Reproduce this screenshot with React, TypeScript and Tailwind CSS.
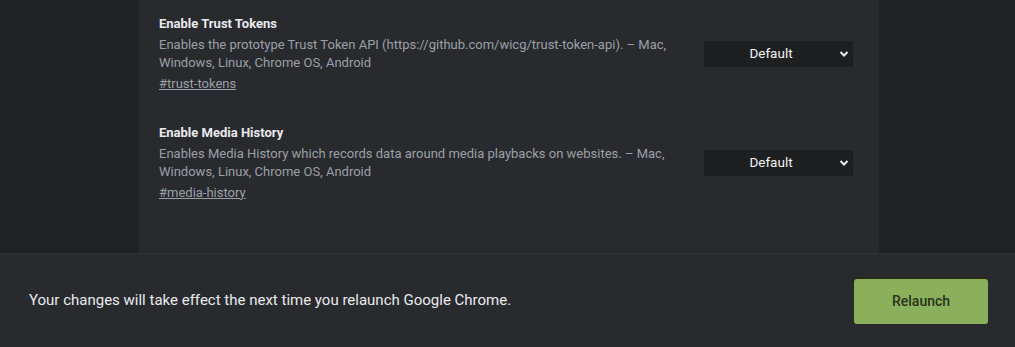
import React from 'react';

type Flag = {
  name: string;
  description: string;
  hash: string;
};

const flags: Flag[] = [
  {
    name: 'Enable Trust Tokens',
    description:
      'Enables the prototype Trust Token API (https://github.com/wicg/trust-token-api). – Mac, Windows, Linux, Chrome OS, Android',
    hash: '#trust-tokens',
  },
  {
    name: 'Enable Media History',
    description:
      'Enables Media History which records data around media playbacks on websites. – Mac, Windows, Linux, Chrome OS, Android',
    hash: '#media-history',
  },
];

const FlagRow: React.FC<{ flag: Flag }> = ({ flag }) => (
  <div className="flex items-center justify-between h-[109px]">
    <div className="w-[520px]">
      <h3 className="text-[13px] font-bold text-[#e8eaed] leading-[18px]">{flag.name}</h3>
      <p className="text-[13px] text-[#9aa0a6] leading-[18px] mt-[3px]">{flag.description}</p>
      <a className="block text-[13px] text-[#9aa0a6] underline leading-[18px] mt-[3px]">{flag.hash}</a>
    </div>
    <div className="relative w-[149px] h-[26px] bg-[#1e1f21] mr-[26px] flex items-center justify-center">
      <span className="text-[13.5px] text-[#f1f3f4] pr-[15px]">Default</span>
      <svg className="absolute right-[4px] top-[8px]" width="10" height="10" viewBox="0 0 10 10">
        <path d="M1.5 3 L5 6.5 L8.5 3" stroke="#e8eaed" strokeWidth="2" fill="none" />
      </svg>
    </div>
  </div>
);

export default function App() {
  return (
    <div className="w-[1015px] h-[347px] bg-[#202124] flex flex-col overflow-hidden" style={{ fontFamily: 'Roboto, "Liberation Sans", sans-serif' }}>
      <div className="flex-1 flex pl-[139px] min-h-0">
        <div className="w-[740px] bg-[#292a2e] pl-[20px] pt-0 -mt-[1px]">
          {flags.map(f => (
            <FlagRow key={f.hash} flag={f} />
          ))}
        </div>
      </div>
      <div className="h-[94px] bg-[#292a2e] border-t border-[#323337] flex items-center justify-between pl-[29px] pr-[27px]">
        <p className="text-[15px] text-[#e8eaed]">Your changes will take effect the next time you relaunch Google Chrome.</p>
        <button className="w-[134px] h-[45px] mt-[1px] rounded-[3px] bg-[#8bb05b] text-[14px] font-medium text-[#28321c] shadow-[0_-2px_0_#2b2a12]">
          Relaunch
        </button>
      </div>
    </div>
  );
}
